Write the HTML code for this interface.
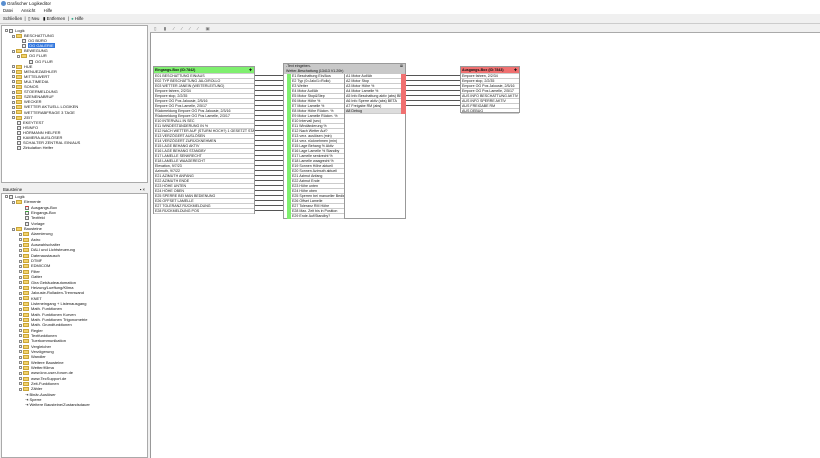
<!DOCTYPE html>
<html><head><meta charset="utf-8"><style>
*{box-sizing:border-box;margin:0;padding:0}
body{width:820px;height:458px;overflow:hidden;background:#f0f0f0;font-family:"Liberation Sans",sans-serif;font-size:4px;color:#111;position:relative}
.a{position:absolute}
.tree div{height:5.1px;line-height:5.1px;white-space:nowrap;position:relative}
.tree2 div{height:5.35px;line-height:5.35px;white-space:nowrap;position:relative}
.f{display:inline-block;width:6px;height:4px;background:#f3d36b;border:0.5px solid #c9a53a;vertical-align:middle;margin-right:2px}
.p{display:inline-block;width:3px;height:3px;border:0.5px solid #888;vertical-align:middle;margin-right:1px;background:#fff}
.d{display:inline-block;width:4px;height:4px;border:0.5px solid #777;vertical-align:middle;margin-right:2px;background:#eee}
.blk div{height:5px;line-height:5px;border-bottom:0.5px solid #ccc;white-space:nowrap;overflow:hidden;padding-left:1px;font-size:3.6px}
</style></head><body>
<div class="a" style="left:0;top:0;width:820px;height:8px;background:#fff;font-size:4.5px;line-height:8px;padding-left:7px">Grafischer Logikeditor</div>
<div class="a" style="left:1px;top:1px;width:5px;height:5px;border-radius:50%;background:#5a8fd0"></div>
<div class="a" style="left:0;top:8px;width:820px;height:6px;background:#fff;font-size:4.3px;line-height:6px;padding-left:3px;word-spacing:3px">Datei&nbsp; Ansicht&nbsp; Hilfe</div>
<div class="a" style="left:0;top:14px;width:820px;height:10px;background:#f0f0f0;border-bottom:0.5px solid #ccc;font-size:4.3px;line-height:10px;padding-left:3px">Schließen &nbsp;|&nbsp; ▯ Neu &nbsp; ▮ Entfernen &nbsp;|&nbsp; <span style="color:#3a8">●</span> Hilfe</div>
<div class="a tree" style="left:1px;top:25px;width:147px;height:158px;background:#fff;border:0.5px solid #aaa;padding:2px 0 0 3px">
<div><span class="p"></span><span class="d"></span>Logik</div>
<div style="padding-left:7px"><span class="p"></span><span class="f"></span>BESCHATTUNG</div>
<div style="padding-left:17px"><span class="d"></span>OG BÜRO</div>
<div style="padding-left:17px"><span class="d"></span><span style="background:#3377dd;color:#fff;padding:0 1px">OG GALERIE</span></div>
<div style="padding-left:7px"><span class="p"></span><span class="f"></span>BEWEGUNG</div>
<div style="padding-left:12px"><span class="p"></span><span class="f"></span>OG FLUR</div>
<div style="padding-left:24px"><span class="d"></span>OG FLUR</div>
<div style="padding-left:7px"><span class="p"></span><span class="f"></span>HUE</div>
<div style="padding-left:7px"><span class="p"></span><span class="f"></span>MENUEZAEHLER</div>
<div style="padding-left:7px"><span class="p"></span><span class="f"></span>MITTELWERT</div>
<div style="padding-left:7px"><span class="p"></span><span class="f"></span>MULTIMEDIA</div>
<div style="padding-left:7px"><span class="p"></span><span class="f"></span>SONOS</div>
<div style="padding-left:7px"><span class="p"></span><span class="f"></span>STOERMELDUNG</div>
<div style="padding-left:7px"><span class="p"></span><span class="f"></span>SZENENABRUF</div>
<div style="padding-left:7px"><span class="p"></span><span class="f"></span>WECKER</div>
<div style="padding-left:7px"><span class="p"></span><span class="f"></span>WETTER AKTUELL LOGIKEN</div>
<div style="padding-left:7px"><span class="p"></span><span class="f"></span>WETTERABFRAGE 3 TAGE</div>
<div style="padding-left:7px"><span class="p"></span><span class="f"></span>ZEIT</div>
<div style="padding-left:12px"><span class="d"></span>EKEYTEST</div>
<div style="padding-left:12px"><span class="d"></span>HSINFO</div>
<div style="padding-left:12px"><span class="d"></span>HÖRMANN HELFER</div>
<div style="padding-left:12px"><span class="d"></span>KAMERA AUSLÖSER</div>
<div style="padding-left:12px"><span class="d"></span>SCHALTER ZENTRAL EIN/AUS</div>
<div style="padding-left:12px"><span class="d"></span>Zirkulation Helfer</div>
</div>
<div class="a" style="left:1px;top:186px;width:147px;height:7px;background:#f0f0f0;font-size:4.3px;line-height:7px;padding-left:2px">Bausteine<span style="position:absolute;right:3px">▪ ×</span></div>
<div class="a tree2" style="left:1px;top:193px;width:147px;height:265px;background:#fff;border:0.5px solid #aaa;padding:0 0 0 3px">
<div><span class="p"></span><span class="d"></span>Logik</div>
<div style="padding-left:7px"><span class="p"></span><span class="f"></span>Elemente</div>
<div style="padding-left:20px"><span class="d" style="border-top:1px solid #d33"></span>Ausgangs-Box</div>
<div style="padding-left:20px"><span class="d" style="border-top:1px solid #3a3"></span>Eingangs-Box</div>
<div style="padding-left:20px"><span class="d"></span>Textfeld</div>
<div style="padding-left:20px"><span class="d"></span>Vorlage</div>
<div style="padding-left:7px"><span class="p"></span><span class="f"></span>Bausteine</div>
<div style="padding-left:14px"><span class="p"></span><span class="f"></span>Alarmierung</div>
<div style="padding-left:14px"><span class="p"></span><span class="f"></span>Astro</div>
<div style="padding-left:14px"><span class="p"></span><span class="f"></span>Auswahlschalter</div>
<div style="padding-left:14px"><span class="p"></span><span class="f"></span>DALI und Lichtsteuerung</div>
<div style="padding-left:14px"><span class="p"></span><span class="f"></span>Datenaustausch</div>
<div style="padding-left:14px"><span class="p"></span><span class="f"></span>DTMF</div>
<div style="padding-left:14px"><span class="p"></span><span class="f"></span>EDMICOM</div>
<div style="padding-left:14px"><span class="p"></span><span class="f"></span>Filter</div>
<div style="padding-left:14px"><span class="p"></span><span class="f"></span>Gatter</div>
<div style="padding-left:14px"><span class="p"></span><span class="f"></span>Gira Gebäudeautomation</div>
<div style="padding-left:14px"><span class="p"></span><span class="f"></span>Heizung/Lueftung/Klima</div>
<div style="padding-left:14px"><span class="p"></span><span class="f"></span>Jalousie-Rolladen-Trennwand</div>
<div style="padding-left:14px"><span class="p"></span><span class="f"></span>KNET</div>
<div style="padding-left:14px"><span class="p"></span><span class="f"></span>Listeneingang + Listenausgang</div>
<div style="padding-left:14px"><span class="p"></span><span class="f"></span>Math. Funktionen</div>
<div style="padding-left:14px"><span class="p"></span><span class="f"></span>Math. Funktionen Kurven</div>
<div style="padding-left:14px"><span class="p"></span><span class="f"></span>Math. Funktionen Trigonometrie</div>
<div style="padding-left:14px"><span class="p"></span><span class="f"></span>Math. Grundfunktionen</div>
<div style="padding-left:14px"><span class="p"></span><span class="f"></span>Regler</div>
<div style="padding-left:14px"><span class="p"></span><span class="f"></span>Textfunktionen</div>
<div style="padding-left:14px"><span class="p"></span><span class="f"></span>Tuerkommunikation</div>
<div style="padding-left:14px"><span class="p"></span><span class="f"></span>Vergleicher</div>
<div style="padding-left:14px"><span class="p"></span><span class="f"></span>Verzögerung</div>
<div style="padding-left:14px"><span class="p"></span><span class="f"></span>Wandler</div>
<div style="padding-left:14px"><span class="p"></span><span class="f"></span>Weitere Bausteine</div>
<div style="padding-left:14px"><span class="p"></span><span class="f"></span>Wetter/Klima</div>
<div style="padding-left:14px"><span class="p"></span><span class="f"></span>www.knx-user-forum.de</div>
<div style="padding-left:14px"><span class="p"></span><span class="f"></span>www.TecSupport.de</div>
<div style="padding-left:14px"><span class="p"></span><span class="f"></span>Zeit-Funktionen</div>
<div style="padding-left:14px"><span class="p"></span><span class="f"></span>Zähler</div>
<div style="padding-left:20px">⇥ Binär-Auslöser</div>
<div style="padding-left:20px">⇥ Sperre</div>
<div style="padding-left:20px">⇥ Weitere Bausteine/Zustandsdauer</div>
</div>
<div class="a" style="left:150px;top:24px;width:670px;height:434px;background:#fff;border-left:0.5px solid #999"></div>
<div class="a" style="left:150px;top:24px;width:670px;height:9px;background:#f0f0f0;border-bottom:0.5px solid #aaa;font-size:4.5px;line-height:9px;padding-left:4px;color:#777;letter-spacing:3px">▯ ▮ ⁄ ⁄ ⁄ ⁄ ▣</div>
<div class="a" style="left:250px;top:73px;width:37px;height:140px;background:repeating-linear-gradient(to bottom,transparent 0 2px,#555 2px 3px,transparent 3px 5px)"></div>
<div class="a" style="left:400px;top:73px;width:66px;height:35px;background:repeating-linear-gradient(to bottom,transparent 0 2px,#555 2px 3px,transparent 3px 5px)"></div>
<div class="a blk" style="left:153px;top:66px;width:102px;height:148px;background:#fff;border:0.5px solid #999">
<div style="background:#7fef6f;height:7px;line-height:7px;font-weight:bold">Eingangs-Box (ID:7842)<span style="position:absolute;right:2px">✚</span></div>
<div>E01 BESCHATTUNG EIN/AUS</div><div>E02 TYP BESCHATTUNG JALO/ROLLO</div><div>E03 WETTER JANEIN (WEITERLEITUNG)</div><div>Empore fahren, 2/2/34</div><div>Empore stop, 2/2/35</div><div>Empore OG Pos Jalousie, 2/5/16</div><div>Empore OG Pos Lamelle, 2/5/17</div><div>Rückmeldung Empore OG Pos Jalousie, 2/3/16</div><div>Rückmeldung Empore OG Pos Lamelle, 2/3/17</div><div>E10 INTERVALL IN SEC</div><div>E11 WINDESTÄNDERUNG IN %</div><div>E12 NACH WETTER AUF (STURM HOCH?) 1 GESETZT STATT 0</div><div>E13 VERZÖGERT AUSLÖSEN</div><div>E14 VERZÖGERT ZURÜCKNEHMEN</div><div>E15 LAGE BEHANG AKTIV</div><div>E16 LAGE BEHANG STANDBY</div><div>E17 LAMELLE SENKRECHT</div><div>E18 LAMELLE WAAGERECHT</div><div>Elevation, 9/7/23</div><div>Azimuth, 9/7/22</div><div>E21 AZIMUTH ANFANG</div><div>E22 AZIMUTH ENDE</div><div>E23 HÖHE UNTEN</div><div>E24 HÖHE OBEN</div><div>E25 SPERRE BEI MAN BEDIENUNG</div><div>E26 OFFSET LAMELLE</div><div>E27 TOLERANZ RÜCKMELDUNG</div><div>E28 RÜCKMELDUNG POS</div>
</div>
<div class="a" style="left:283px;top:63px;width:123px;height:156px;background:#fff;border:0.5px solid #999">
<div style="background:#c8c8c8;height:10px;font-size:3.6px;line-height:4.5px;padding-left:2px">-Text eingeben-<br>Wetter-Beschattung (13413 V1.20h)<span style="position:absolute;right:2px;top:0">⊠</span></div>
<div class="a" style="left:3px;top:10px;width:4px;height:145px;background:#7fef6f"></div>
<div class="a blk" style="left:7px;top:10px;width:54px;border-right:0.5px solid #999;height:145px">
<div>E1 Beschattung Ein/Aus</div><div>E2 Typ (0=Jalo/1=Rollo)</div><div>E3 Wetter</div><div>E4 Motor Auf/Ab</div><div>E5 Motor Stop&amp;Step</div><div>E6 Motor Höhe %</div><div>E7 Motor Lamelle %</div><div>E8 Motor Höhe Rückm. %</div><div>E9 Motor Lamelle Rückm. %</div><div>E10 Intervall (sec)</div><div>E11 Windänderung %</div><div>E12 Nach Wetter Auf?</div><div>E13 verz. auslösen (min)</div><div>E14 verz. rücknehmen (min)</div><div>E15 Lage Behang % Aktiv</div><div>E16 Lage Lamelle % Standby</div><div>E17 Lamelle senkrecht %</div><div>E18 Lamelle waagrecht %</div><div>E19 Sonnen Höhe aktuell</div><div>E20 Sonnen Azimuth aktuell</div><div>E21 Azimut Anfang</div><div>E22 Azimut Ende</div><div>E23 Höhe unten</div><div>E24 Höhe oben</div><div>E25 Sperren bei manueller Bedienung</div><div>E26 Offset Lamelle</div><div>E27 Toleranz RM Höhe</div><div>E28 Max. Zeit bis in Position</div><div>E29 Ende Auf/Standby?</div>
</div>
<div class="a blk" style="left:61px;top:10px;width:56px">
<div>A1 Motor Auf/Ab</div><div>A2 Motor Stop</div><div>A3 Motor Höhe %</div><div>A4 Motor Lamelle %</div><div>A5 Info Beschattung aktiv (abs) BETA</div><div>A6 Info Sperre aktiv (abs) BETA</div><div>A7 Freigabe RM (abs)</div><div style="background:#ddd">A8 Debug</div>
</div>
<div class="a" style="left:117px;top:10px;width:5px;height:40px;background:#f07070"></div>
</div>
<div class="a blk" style="left:460px;top:66px;width:60px;height:47px;background:#fff;border:0.5px solid #999">
<div style="background:#f07070;height:7px;line-height:7px;font-weight:bold">Ausgangs-Box (ID:7843)<span style="position:absolute;right:2px">✚</span></div>
<div>Empore fahren, 2/2/34</div><div>Empore stop, 2/2/35</div><div>Empore OG Pos Jalousie, 2/5/16</div><div>Empore OG Pos Lamelle, 2/5/17</div><div>AUS INFO BESCHATTUNG AKTIV</div><div>AUS INFO SPERRE AKTIV</div><div>AUS FREIGABE RM</div><div>AUS DEBUG</div>
</div>
</body></html>
